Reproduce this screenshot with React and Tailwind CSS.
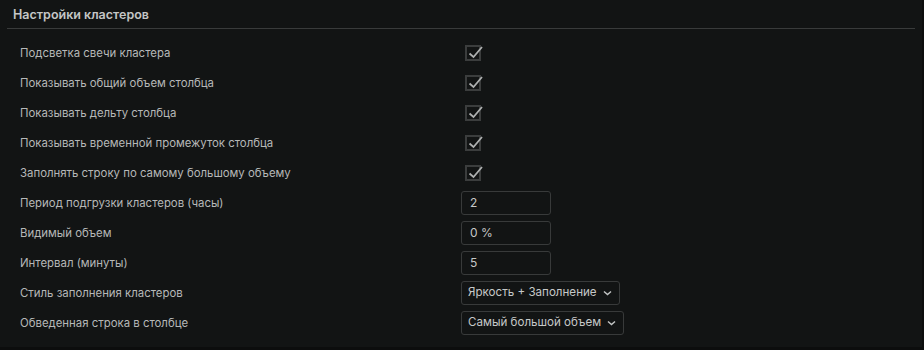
import React from 'react';

const rows = [
  { label: 'Подсветка свечи кластера', type: 'check' },
  { label: 'Показывать общий объем столбца', type: 'check' },
  { label: 'Показывать дельту столбца', type: 'check' },
  { label: 'Показывать временной промежуток столбца', type: 'check' },
  { label: 'Заполнять строку по самому большому объему', type: 'check' },
  { label: 'Период подгрузки кластеров (часы)', type: 'input', value: '2' },
  { label: 'Видимый объем', type: 'input', value: '0 %' },
  { label: 'Интервал (минуты)', type: 'input', value: '5' },
  { label: 'Стиль заполнения кластеров', type: 'select', value: 'Яркость + Заполнение' },
  { label: 'Обведенная строка в столбце', type: 'select', value: 'Самый большой объем' },
];

const CheckBox = () => (
  <div className="relative ml-1 w-4 h-4 border-2 border-[#3b3d3d]">
    <svg className="absolute -left-[2px] -top-[2px]" width="20" height="18" viewBox="0 0 20 18" fill="none">
      <path d="M4.5 8.5 L8.5 12 L17 2" stroke="#aeb0b0" strokeWidth="1.8" />
    </svg>
  </div>
);

const Chevron = () => (
  <svg width="9" height="6" viewBox="0 0 9 6" fill="none">
    <path d="M1 1.5 L4.5 4.5 L8 1.5" stroke="#c2c4c4" strokeWidth="1.5" />
  </svg>
);

const Control = ({ row }) => {
  if (row.type === 'check') return <CheckBox />;
  if (row.type === 'input') {
    return (
      <div className="w-[90px] h-6 border border-[#383a3a] rounded-[3px] flex items-center pl-2 text-[12px] text-[#c6c8c8]">
        {row.value}
      </div>
    );
  }
  return (
    <div className="h-6 border border-[#383a3a] rounded-[3px] flex items-center pl-[6px] pr-[7px] gap-[6px] text-[11.6px] text-[#c6c8c8]">
      <span>{row.value}</span>
      <Chevron />
    </div>
  );
};

export default function App() {
  return (
    <div className="w-[924px] h-[350px] bg-[#0c0d0d] font-['Inter',sans-serif]">
      <div className="w-[922px] h-[347px] bg-[#121414]">
        <div className="mx-[7px] h-[29px] border-b border-[#393b3b] flex items-center pl-[6px] pt-[3px]">
          <span className="text-[12.5px] font-semibold text-[#c4c6c6]">Настройки кластеров</span>
        </div>
        <div className="pt-[9px]">
          {rows.map((row, i) => (
            <div key={i} className="h-[30px] flex items-center">
              <div className="w-[461px] pl-5 pt-[2px] text-[11.4px] text-[#b6b8b8]">{row.label}</div>
              <Control row={row} />
            </div>
          ))}
        </div>
      </div>
    </div>
  );
}
